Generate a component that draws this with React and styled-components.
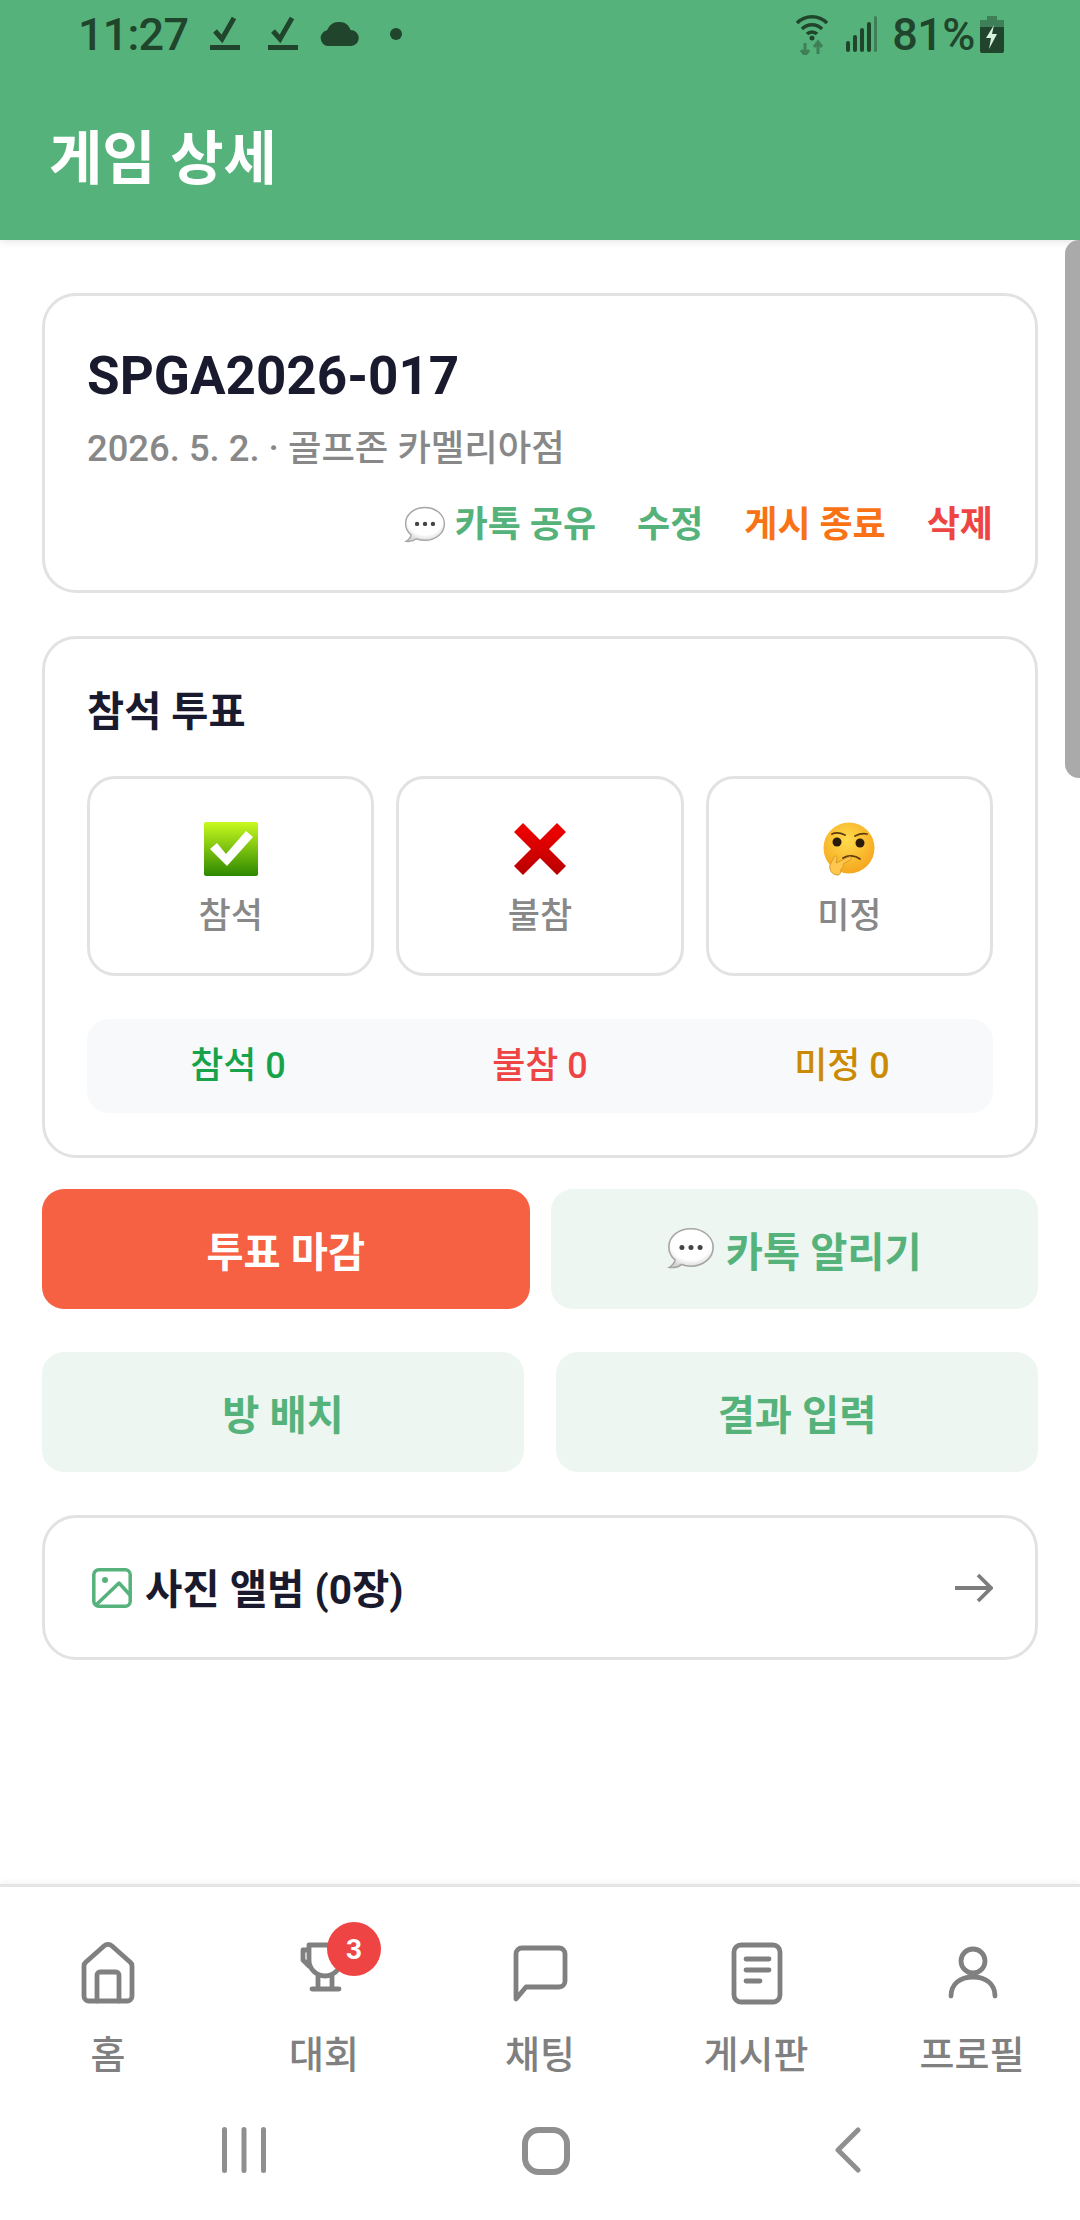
import React from "react";
import styled, { createGlobalStyle } from "styled-components";

const Global = createGlobalStyle`
  html, body { margin: 0; padding: 0; background: #fff; }
  * { box-sizing: border-box; }
  body { font-family: Roboto, "Noto Sans CJK KR", sans-serif; }
`;

const Page = styled.div`
  position: relative;
  width: 1080px;
  height: 2220px;
  display: flex;
  flex-direction: column;
  overflow: hidden;
  background: #fff;
`;
const Header = styled.header`
  height: 240px;
  flex: none;
  background: #55b27a;
  box-shadow: 0 2px 8px rgba(0, 0, 0, 0.1);
  display: flex;
  flex-direction: column;
  z-index: 1;
`;
const StatusBar = styled.div`
  height: 68px;
  padding: 0 76px 0 78px;
  display: flex;
  align-items: center;
  justify-content: space-between;
  color: #20452c;
`;
const StatusGroup = styled.div`
  display: flex;
  align-items: center;
  gap: ${(p) => p.$gap}px;
`;
const Time = styled.span`
  font-size: 45px;
  font-weight: 500;
  line-height: 1;
  margin-right: -6px;
  letter-spacing: -0.8px;
`;
const CloudSlot = styled.span`
  display: flex;
  margin: 0 3px 0 -6px;
`;
const Percent = styled.span`
  font-size: 45px;
  font-weight: 500;
  line-height: 1;
  letter-spacing: -0.5px;
  margin: 0 -9px 0 1px;
`;
const Title = styled.h1`
  margin: 46px 0 0 49px;
  font-size: 58px;
  line-height: 90px;
  font-weight: 700;
  color: #fff;
`;
const Main = styled.main`
  flex: 1;
  padding: 53px 42px 0 42px;
  display: flex;
  flex-direction: column;
`;
const Card = styled.section`
  border: 3px solid #e2e2e2;
  border-radius: 34px;
  background: #fff;
  padding: ${(p) => p.$pad};
  margin-bottom: ${(p) => p.$mb}px;
`;
const GameCode = styled.h2`
  margin: 0;
  font-size: 53px;
  line-height: 72px;
  font-weight: 700;
  color: #1a1a2e;
`;
const Sub = styled.p`
  margin: 12px 0 0;
  font-size: 36.4px;
  line-height: 50px;
  font-weight: 500;
  color: #888;
`;
const Actions = styled.div`
  display: flex;
  justify-content: flex-end;
  gap: 41px;
  margin-top: 26px;
`;
const Action = styled.span`
  display: inline-flex;
  align-items: center;
  gap: 9px;
  font-size: 36px;
  line-height: 50px;
  font-weight: 700;
  color: ${(p) => p.$color};
`;
const SectionTitle = styled.h3`
  margin: 0;
  font-size: 40.4px;
  line-height: 54px;
  margin-top: -1px;
  font-weight: 700;
  color: #1a1a2e;
`;
const VoteRow = styled.div`
  display: grid;
  grid-template-columns: repeat(3, 1fr);
  gap: 22px;
  margin-top: 36px;
`;
const VoteButton = styled.div`
  height: 200px;
  border: 3px solid #e2e2e2;
  border-radius: 28px;
  display: flex;
  flex-direction: column;
  align-items: center;
  padding-top: 42px;
`;
const VoteLabel = styled.span`
  margin-top: 15px;
  font-size: 35px;
  line-height: 50px;
  font-weight: 500;
  color: #888;
`;
const Stats = styled.div`
  margin-top: 43px;
  height: 94px;
  background: #f8f9fa;
  border-radius: 22px;
  display: grid;
  grid-template-columns: repeat(3, 1fr);
  align-items: center;
  text-align: center;
`;
const Stat = styled.span`
  font-size: 36px;
  line-height: 50px;
  font-weight: 500;
  color: ${(p) => p.$color};
`;
const ButtonRow = styled.div`
  display: grid;
  grid-template-columns: 1fr 1fr;
  gap: ${(p) => p.$gap}px;
  margin-bottom: ${(p) => p.$mb}px;
`;
const Btn = styled.div`
  height: 120px;
  border-radius: 22px;
  display: flex;
  align-items: center;
  justify-content: center;
  gap: 11px;
  font-size: 40.4px;
  font-weight: 700;
  background: ${(p) => (p.$primary ? "#f56142" : "#edf6f1")};
  color: ${(p) => (p.$primary ? "#fff" : "#55b27a")};
`;
const AlbumCard = styled.section`
  height: 145px;
  border: 3px solid #e2e2e2;
  border-radius: 34px;
  padding: 0 42px 0 47px;
  display: flex;
  align-items: center;
  justify-content: space-between;
`;
const AlbumLabel = styled.div`
  display: flex;
  align-items: center;
  gap: 13px;
  font-size: 40.6px;
  font-weight: 700;
  color: #1a1a2e;
`;
const AlbumText = styled.span`
  margin-top: -3px;
`;
const Scrollbar = styled.div`
  position: absolute;
  right: 0;
  top: 240px;
  width: 15px;
  height: 538px;
  background: #aaa;
  border-radius: 14px 0 0 14px;
  z-index: 2;
`;
const Nav = styled.nav`
  flex: none;
  height: 225px;
  border-top: 3px solid #e5e5e5;
  box-shadow: 0 -2px 6px rgba(0, 0, 0, 0.05);
  display: grid;
  grid-template-columns: repeat(5, 216px);
  background: #fff;
`;
const NavItem = styled.div`
  display: flex;
  flex-direction: column;
  align-items: center;
  padding-top: 52px;
  color: #808080;
`;
const NavIcon = styled.div`
  position: relative;
  width: 68px;
  height: 68px;
`;
const Badge = styled.span`
  position: absolute;
  left: 37px;
  top: -17px;
  width: 54px;
  height: 54px;
  border-radius: 50%;
  background: #ef4444;
  color: #fff;
  font-size: 28px;
  font-weight: 700;
  display: flex;
  align-items: center;
  justify-content: center;
`;
const NavLabel = styled.span`
  margin-top: 23px;
  font-size: 38px;
  line-height: 50px;
  font-weight: 500;
  color: #808080;
`;
const SystemBar = styled.div`
  flex: none;
  height: 111px;
  display: grid;
  grid-template-columns: 300px 313px 26px;
  align-items: start;
  padding: 18px 0 0 222px;
  background: #fff;
`;

const Bubble = ({ size = 42 }) => (
  <svg width={size} height={size * 0.9} viewBox="0 0 42 38">
    <defs>
      <radialGradient id="bub" cx="50%" cy="35%" r="65%">
        <stop offset="70%" stopColor="#fff" />
        <stop offset="100%" stopColor="#d6d6d6" />
      </radialGradient>
    </defs>
    <path d="M21 1.500C10 1.500 1.500 8.500 1.500 17.500c0 4.500 2 8.500 5.500 11.500-.5 2.500-2.500 5-5 6.500 4 .5 8-.5 10.500-2.500 2.600 1 5.500 1.500 8.500 1.500 11 0 19.500-7.500 19.500-16.500S32 1.500 21 1.500z" fill="url(#bub)" stroke="#a6a6a6" strokeWidth="1.4" />
    <circle cx="13" cy="18" r="2.200" fill="#444" />
    <circle cx="21" cy="18" r="2.200" fill="#444" />
    <circle cx="29" cy="18" r="2.200" fill="#444" />
  </svg>
);
const CheckEmoji = () => (
  <svg width="56" height="56" viewBox="0 0 56 56">
    <defs>
      <linearGradient id="chk" x1="0" y1="0" x2="0" y2="1">
        <stop offset="0" stopColor="#c8fa1e" />
        <stop offset="1" stopColor="#2d8800" />
      </linearGradient>
    </defs>
    <rect x="1" y="1" width="54" height="54" rx="2" fill="url(#chk)" />
    <path d="M7 28l7-6 9 11L43 10l7 6-26 29z" fill="#fff" />
  </svg>
);
const CrossEmoji = () => (
  <svg width="56" height="56" viewBox="0 0 56 56">
    <defs>
      <linearGradient id="crs" x1="0" y1="0" x2="0" y2="1">
        <stop offset="0" stopColor="#f40000" />
        <stop offset="1" stopColor="#b80000" />
      </linearGradient>
    </defs>
    <path d="M11 2l17 17L45 2l9 9-17 17 17 17-9 9-17-17-17 17-9-9 17-17L2 11z" fill="url(#crs)" />
  </svg>
);
const ThinkEmoji = () => (
  <svg width="56" height="56" viewBox="0 0 56 56">
    <defs>
      <radialGradient id="thk" cx="45%" cy="35%" r="70%">
        <stop offset="0" stopColor="#ffdb4d" />
        <stop offset="1" stopColor="#f5a31a" />
      </radialGradient>
    </defs>
    <circle cx="28" cy="27" r="25.500" fill="url(#thk)" />
    <circle cx="16" cy="21" r="4.500" fill="#2a1a0a" />
    <circle cx="39" cy="22" r="4.500" fill="#2a1a0a" />
    <path d="M11 13c4-2 9-1 13 1M34 15c4-2 8-3 12-2" fill="none" stroke="#5f3a10" strokeWidth="1.800" strokeLinecap="round" />
    <path d="M22 37c5-3 12-3 17 1" fill="none" stroke="#5f3a10" strokeWidth="1.800" strokeLinecap="round" />
    <path d="M17 54c-6 0-9-5-8-10l4-8c1-2 3-1 3 1l-1 5 13-6c2-1 3 2 1 3l-7 4c1 2 0 4-2 5 0 3-1 6-3 6z" fill="#ffc84d" stroke="#d89a2a" strokeWidth="1" />
  </svg>
);
const StatusCheck = () => (
  <svg width="30" height="36" viewBox="0 0 30 36">
    <path d="M5 15l7 8L24 2" fill="none" stroke="currentColor" strokeWidth="5" />
    <rect y="29" width="30" height="5" fill="currentColor" />
  </svg>
);
const Cloud = () => (
  <svg width="39" height="24" viewBox="0 0 39 24">
    <path d="M8 24a8 8 0 0 1-1-15.800A12.500 12.500 0 0 1 20 0c5 0 9 3 10.500 8A8 8 0 0 1 31 24z" fill="currentColor" />
  </svg>
);
const Wifi = () => (
  <svg width="34" height="42" viewBox="0 0 34 42">
    <path d="M2 10a21 21 0 0 1 30 0M7 16a14 14 0 0 1 20 0M12 21a7 7 0 0 1 10 0" fill="none" stroke="currentColor" strokeWidth="3.500" />
    <circle cx="17" cy="25" r="2.500" fill="currentColor" />
    <path d="M10 30v11M6 37l4 5 4-5M23 41V30M19 34l4-5 4 5" fill="none" stroke="#3f7f58" strokeWidth="3" />
  </svg>
);
const Signal = () => (
  <svg width="34" height="36" viewBox="-3 0 34 36">
    <g fill="currentColor">
      <rect x="0" y="25" width="4" height="11" rx="2" />
      <rect x="7" y="19" width="4" height="17" rx="2" />
      <rect x="14" y="12" width="4" height="24" rx="2" />
      <rect x="21" y="6" width="4" height="30" rx="2" />
      <rect x="28" y="0" width="3" height="36" rx="1.500" fill="#3f7f58" />
    </g>
  </svg>
);
const Battery = () => (
  <svg width="24" height="37" viewBox="0 0 24 37">
    <path d="M7 0h10v4h7v9H0V4h7z" fill="#3f7f58" />
    <path d="M0 11h24v24a2 2 0 0 1-2 2H2a2 2 0 0 1-2-2z" fill="currentColor" />
    <path d="M14 9L6 22h5l-2 11 8-15h-5z" fill="#d9f0e0" />
  </svg>
);
const GlyphSvg = ({ children, size = 68, sw = 4.800 }) => (
  <svg width={size} height={size} viewBox="0 0 68 68" fill="none" stroke="currentColor" strokeWidth={sw} strokeLinecap="round" strokeLinejoin="round">
    {children}
  </svg>
);
const HomeIcon = () => (
  <GlyphSvg>
    <path d="M10 27a5 5 0 0 1 2-4L30 7a6 6 0 0 1 8 0l18 16a5 5 0 0 1 2 4v30a5 5 0 0 1-5 5H15a5 5 0 0 1-5-5z" />
    <path d="M45 62V36a3 3 0 0 0-3-3H26a3 3 0 0 0-3 3v26" />
  </GlyphSvg>
);
const TrophyIcon = () => (
  <GlyphSvg>
    <path d="M19 6h32v15a16 16 0 0 1-32 0zM19 11h-6v10l6 6M28 37v13M42 37v13M22 50h27" />
  </GlyphSvg>
);
const ChatIcon = () => (
  <GlyphSvg>
    <path d="M10 15a6 6 0 0 1 6-6h37a6 6 0 0 1 6 6v27a6 6 0 0 1-6 6H20L10 60z" />
  </GlyphSvg>
);
const BoardIcon = () => (
  <GlyphSvg>
    <rect x="12" y="6" width="46" height="57" rx="7" />
    <path d="M24 20h23M24 31h23M24 42h14" />
  </GlyphSvg>
);
const UserIcon = () => (
  <GlyphSvg>
    <circle cx="35" cy="22" r="12" />
    <path d="M13 57c0-12 9-19 22-19s22 7 22 19" />
  </GlyphSvg>
);
const ImageIcon = () => (
  <svg width="40" height="40" viewBox="0 0 40 40" fill="none" stroke="#55b27a" strokeWidth="3.500" strokeLinejoin="round">
    <rect x="1.800" y="1.800" width="36.400" height="36.400" rx="5" />
    <circle cx="13" cy="12" r="3" fill="#55b27a" stroke="none" />
    <path d="M4 37L27 15l11 12" />
  </svg>
);
const ArrowIcon = () => (
  <svg width="38" height="30" viewBox="0 0 38 30" fill="none" stroke="#7d7d7d" strokeWidth="3.800">
    <path d="M0 15h36M23 2l13 13-13 13" />
  </svg>
);
const NavBars = () => (
  <svg width="44" height="46" viewBox="0 0 44 46" fill="#8f8f8f">
    <rect x="0" width="5" height="46" rx="2.500" />
    <rect x="19.500" width="5" height="46" rx="2.500" />
    <rect x="39" width="5" height="46" rx="2.500" />
  </svg>
);
const NavSquare = () => (
  <svg width="48" height="48" viewBox="0 0 48 48" fill="none" stroke="#8f8f8f" strokeWidth="6">
    <rect x="3" y="3" width="42" height="42" rx="14" />
  </svg>
);
const NavBack = () => (
  <svg width="26" height="46" viewBox="0 0 26 46" fill="none" stroke="#8f8f8f" strokeWidth="5" strokeLinecap="round" strokeLinejoin="round">
    <path d="M23 3L3 23l20 20" />
  </svg>
);

const navItems = [
  { label: "홈", icon: <HomeIcon /> },
  { label: "대회", icon: <TrophyIcon />, badge: 3 },
  { label: "채팅", icon: <ChatIcon /> },
  { label: "게시판", icon: <BoardIcon /> },
  { label: "프로필", icon: <UserIcon /> },
];

export default function App() {
  return (
    <Page>
      <Global />
      <Header>
        <StatusBar>
          <StatusGroup $gap={28}>
            <Time>11:27</Time>
            <StatusCheck />
            <StatusCheck />
            <CloudSlot><Cloud /></CloudSlot>
            <svg width="12" height="12" viewBox="0 0 12 12"><circle cx="6" cy="6" r="6" fill="currentColor" /></svg>
          </StatusGroup>
          <StatusGroup $gap={14}>
            <Wifi />
            <Signal />
            <Percent>81%</Percent>
            <Battery />
          </StatusGroup>
        </StatusBar>
        <Title>게임 상세</Title>
      </Header>
      <Main>
        <Card $pad="44px 42px 40px 42px" $mb={43}>
          <GameCode>SPGA2026-017</GameCode>
          <Sub>2026. 5. 2. · 골프존 카멜리아점</Sub>
          <Actions>
            <Action $color="#55b27a"><Bubble />카톡 공유</Action>
            <Action $color="#55b27a">수정</Action>
            <Action $color="#f97316">게시 종료</Action>
            <Action $color="#ef4444">삭제</Action>
          </Actions>
        </Card>
        <Card $pad="48px 42px 42px 42px" $mb={31}>
          <SectionTitle>참석 투표</SectionTitle>
          <VoteRow>
            <VoteButton><CheckEmoji /><VoteLabel>참석</VoteLabel></VoteButton>
            <VoteButton><CrossEmoji /><VoteLabel>불참</VoteLabel></VoteButton>
            <VoteButton><ThinkEmoji /><VoteLabel>미정</VoteLabel></VoteButton>
          </VoteRow>
          <Stats>
            <Stat $color="#16a34a">참석 0</Stat>
            <Stat $color="#ef4444">불참 0</Stat>
            <Stat $color="#ca8a04">미정 0</Stat>
          </Stats>
        </Card>
        <ButtonRow $gap={21} $mb={43}>
          <Btn $primary>투표 마감</Btn>
          <Btn><Bubble size={48} />카톡 알리기</Btn>
        </ButtonRow>
        <ButtonRow $gap={32} $mb={43}>
          <Btn>방 배치</Btn>
          <Btn>결과 입력</Btn>
        </ButtonRow>
        <AlbumCard>
          <AlbumLabel><ImageIcon /><AlbumText>사진 앨범 (0장)</AlbumText></AlbumLabel>
          <ArrowIcon />
        </AlbumCard>
      </Main>
      <Scrollbar />
      <Nav>
        {navItems.map((item) => (
          <NavItem key={item.label}>
            <NavIcon>
              {item.icon}
              {item.badge && <Badge>{item.badge}</Badge>}
            </NavIcon>
            <NavLabel>{item.label}</NavLabel>
          </NavItem>
        ))}
      </Nav>
      <SystemBar>
        <NavBars />
        <NavSquare />
        <NavBack />
      </SystemBar>
    </Page>
  );
}
